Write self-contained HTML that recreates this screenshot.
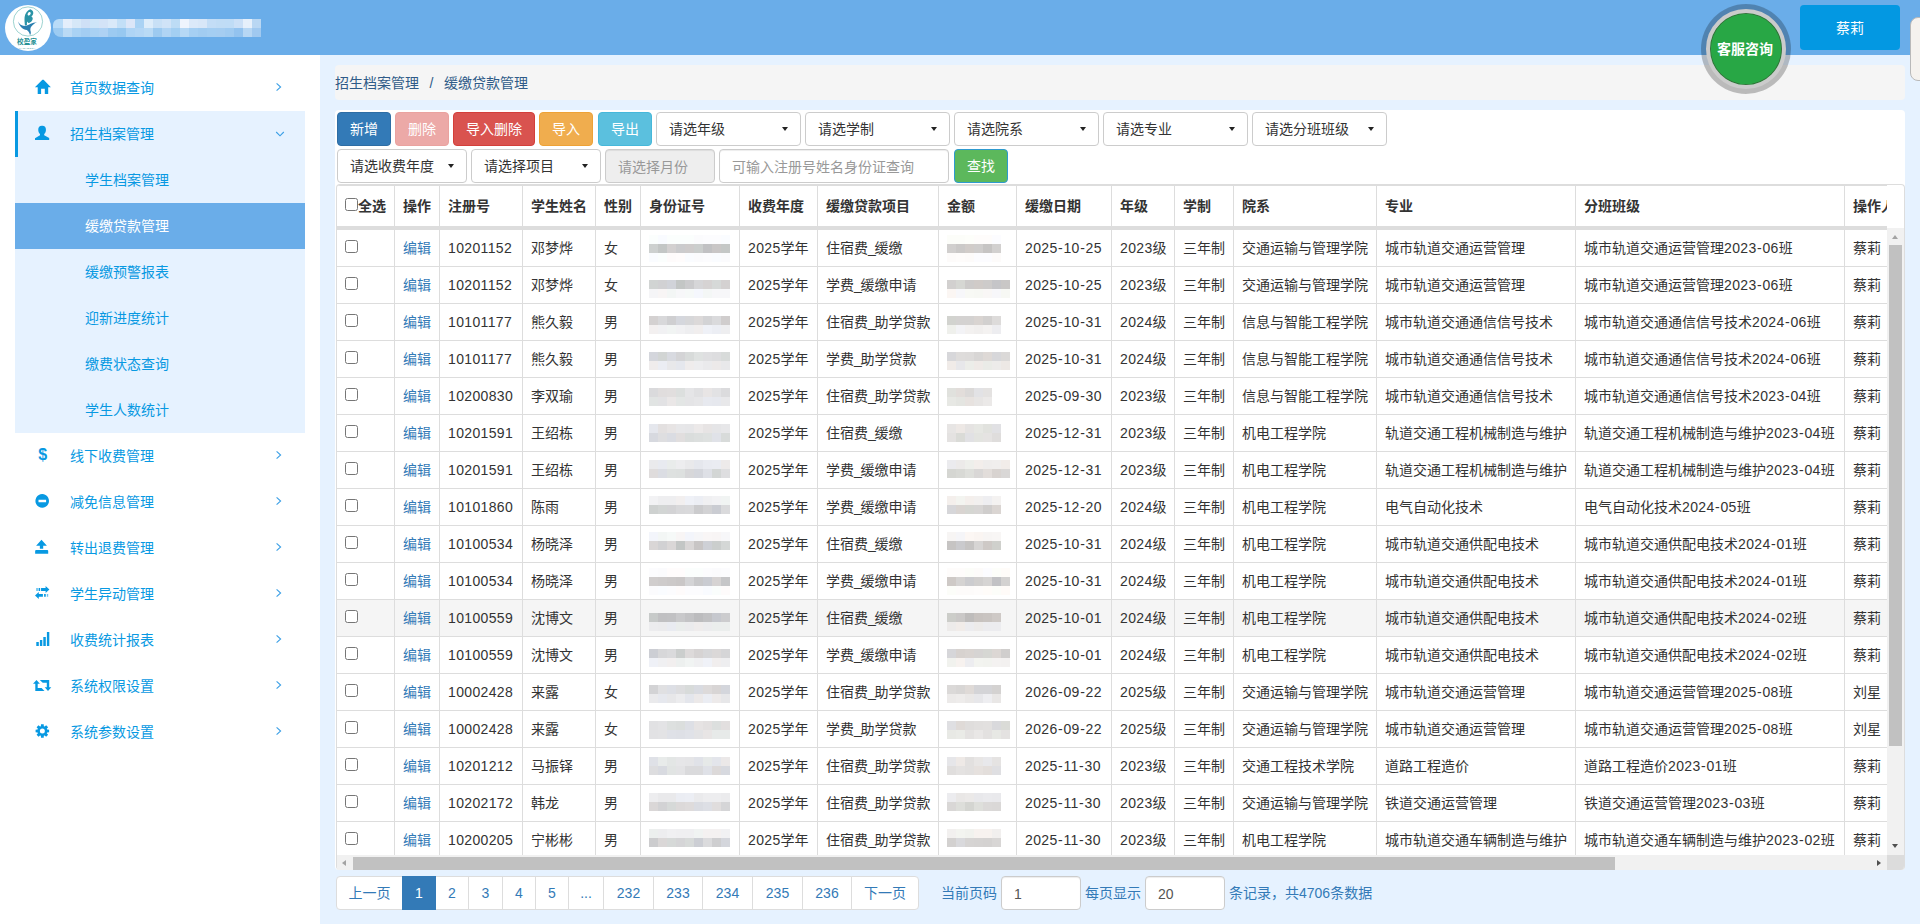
<!DOCTYPE html>
<html lang="zh-CN">
<head>
<meta charset="utf-8">
<title>缓缴贷款管理</title>
<style>
*{box-sizing:border-box;}
html,body{margin:0;padding:0;}
body{width:1920px;height:924px;overflow:hidden;position:relative;background:#e6f2ff;
 font-family:"Liberation Sans","Noto Sans CJK SC",sans-serif;font-size:14px;line-height:20px;color:#333;}
.abs{position:absolute;}
/* header */
#hdr{position:absolute;left:0;top:0;width:1920px;height:55px;background:#6aade9;}
#logo{position:absolute;left:5px;top:5px;width:46px;height:46px;border-radius:50%;background:#fff;overflow:hidden;}
#logo .nm{position:absolute;left:-1px;width:46px;top:33px;text-align:center;font-size:6.600px;line-height:8px;font-weight:bold;color:#1f8f93;letter-spacing:0;}
#logo .py{position:absolute;left:-1px;width:46px;top:42.300px;text-align:center;font-size:2.200px;line-height:3px;color:#17868c;letter-spacing:.3px;}
#ttl{position:absolute;left:53px;top:19px;width:208px;height:18px;overflow:hidden;border-radius:6px 0 0 8px;}
#ttl i{display:block;height:9px;}
#user{position:absolute;left:1800px;top:5px;width:100px;height:45px;border-radius:4px;background:#0398e2;color:#fff;text-align:center;line-height:47px;font-size:14px;}
#kf{position:absolute;left:1706px;top:9px;width:80px;height:80px;border-radius:50%;background:#28a745;border:4px solid #cbcbcb;box-shadow:inset 0 0 0 .8px rgba(70,45,45,.55),0 0 0 5px rgba(0,0,0,.24);color:#fff;font-weight:bold;font-size:14px;text-align:center;line-height:72px;z-index:5;text-indent:-2px;}
#tab{position:absolute;left:1910px;top:16.500px;width:24px;height:64px;border-radius:8px;background:#f5f2ee;border:1px solid #b9b9b9;}
/* sidebar */
#side{position:absolute;left:0;top:55px;width:320px;height:869px;background:#fff;}
#menu{position:absolute;left:15px;top:10px;width:290px;}
.mi{position:relative;height:46px;line-height:46px;color:#0899e2;font-size:14px;}
.mi .tx{position:absolute;left:55px;top:0;}
.mi svg.ic{position:absolute;left:19px;top:15px;width:16px;height:16px;fill:#0899e2;}
.mi svg.ar{position:absolute;left:259px;top:17px;width:10px;height:10px;fill:none;stroke:#6ab0e6;stroke-width:1.1;}
.mi.open{background:#e6f2ff;border-left:3px solid #0899e2;}
.mi.open .tx{left:52px;}
.mi.open svg.ic{left:16px;}
.mi.open svg.ar{left:256px;}
.sub{background:#e6f2ff;}
.si{height:46px;line-height:46px;padding-left:70px;color:#0899e2;font-size:14px;}
.si.act{background:#6aade9;color:#fff;}
/* main */
#bc{position:absolute;left:335px;top:65px;width:1570px;height:35px;border-radius:4px;background:#f5f5f5;color:#2f5b88;line-height:37px;font-size:14px;white-space:nowrap;}
#panel{position:absolute;left:335px;top:110px;width:1570px;height:760px;background:#fff;border-radius:4px;overflow:hidden;}
.btn{position:absolute;height:34px;border-radius:4px;color:#fff;text-align:center;line-height:32px;font-size:14px;border:1px solid transparent;}
.sel{position:absolute;height:34px;border-radius:4px;border:1px solid #ccc;background:#fff;line-height:32px;padding-left:12px;color:#333;font-size:14px;}
.sel:after{content:"";position:absolute;right:12px;top:14px;border:3.8px solid transparent;border-top:4px solid #222;border-bottom:0;}
.inp{position:absolute;height:34px;border-radius:4px;border:1px solid #ccc;background:#fff;line-height:34px;padding-left:12px;color:#999;font-size:14px;box-shadow:inset 0 1px 1px rgba(0,0,0,.075);}
/* table */
#tw{position:absolute;left:336px;top:184px;width:1569px;height:686px;border:1px solid #ddd;border-bottom:0;border-radius:4px;overflow:hidden;background:#fff;}
#tc{position:absolute;left:0;top:0;width:1550px;height:670px;overflow:hidden;}
table{border-collapse:separate;border-spacing:0;table-layout:fixed;width:1639px;}
th,td{border-right:1px solid #ddd;border-bottom:1px solid #ddd;padding:0 0 0 8px;white-space:nowrap;overflow:hidden;text-align:left;font-size:14px;}
th{height:45px;font-weight:bold;color:#333;border-top:1px solid #ddd;border-bottom:4px solid #ddd;}
td{height:37px;color:#333;}
td a{color:#337ab7;text-decoration:none;}
tr.hv td{background:#f5f5f5;}
.cb{display:inline-block;width:13px;height:13px;border:1px solid #767676;border-radius:2.5px;background:#fff;vertical-align:middle;margin:-5px 0 0 0;}
th .cb{margin:-5px 0 0 0;}
.ms{position:absolute;height:9px;}
.d{letter-spacing:.35px;}
.d .h{font-style:normal;margin:0 .45px;}
.u{font-style:normal;margin-right:-1.3px;}
/* scrollbars */
#vs{position:absolute;left:1550px;top:43px;width:17px;height:627px;background:#f1f1f1;}
#vs .th{position:absolute;left:2px;top:17px;width:13px;height:501px;background:#c1c1c1;}
#hs{position:absolute;left:0;top:670px;width:1550px;height:17px;background:#f1f1f1;}
#hs .th{position:absolute;left:16px;top:2px;width:1262px;height:13px;background:#c1c1c1;}
#cn{position:absolute;left:1550px;top:670px;width:17px;height:17px;background:#dcdcdc;}
.tri{position:absolute;width:0;height:0;border:0 solid transparent;}
/* pagination */
#pg{position:absolute;left:336px;top:876px;height:34px;}
.pi{position:absolute;top:0;height:34px;border:1px solid #ddd;background:#fff;color:#337ab7;text-align:center;line-height:32px;font-size:14px;}
.pi.act{background:#337ab7;border-color:#337ab7;color:#fff;}
.pt{position:absolute;top:876px;height:34px;line-height:35px;color:#337ab7;font-size:14px;white-space:nowrap;}
</style>
</head>
<body>
<div id="hdr">
  <div id="logo">
    <svg class="abs" style="left:0;top:0" width="46" height="46" viewBox="0 0 46 46">
      <circle cx="23" cy="16.5" r="14.6" fill="none" stroke="#3aa6a0" stroke-width="0.5"/>
      <path d="M25.300 4.300c-2.600 1-5.200 3.600-5.700 7.800c-.3 3 .1 6.200.3 8.500c.7-.2 1.500-.5 2.200-.9c-.3-1.300-.3-2.500.3-3.300c.3 1 .9 1.600 1.700 1.500c1.700-.5 3.300-2 3.600-3.900c.2-1.300-.4-2.300-1.600-2.600c1.300-.7 2.200-1.900 2.200-3.500c0-1.500-1-2.900-3-3.600z M22.600 9.200c.2-1.200.9-2.100 1.900-2.300c.8 0 1.300.6 1.200 1.500c-.2 1.200-1.300 2-2.600 2.200c-.3-.4-.5-.9-.5-1.400z" fill-rule="evenodd" fill="#2b93a6"/>
      <path d="M13 16.500c1.500 3 4.200 4.800 7.500 4.300c3.500-.6 6.500-3.400 11.500-3.500c-2.500 1-4.500 2.600-6 4.600c-.8 1.200-.8 3-.3 4.600c.3 1.200.2 2.600-.7 3.800c-.4-2.200-1.400-4.200-3.200-5.300c-4-.5-7.300-3.500-8.800-8.500z" fill="#2a7fb0"/>
    </svg>
    <div class="nm">校盈家</div>
    <div class="py">XIAOYINGJIA</div>
  </div>
  <div id="ttl"><i style="background:linear-gradient(90deg,#b8dbf8 0px,#b8dbf8 10px,#e4eefb 10px,#e4eefb 19px,#d6e8f8 19px,#d6e8f8 28px,#cfe0f6 28px,#cfe0f6 37px,#cde5f8 37px,#cde5f8 46px,#d3e3f7 46px,#d3e3f7 55px,#d9e9f9 55px,#d9e9f9 64px,#c2dff7 64px,#c2dff7 73px,#dbe6f8 73px,#dbe6f8 82px,#a9d2f4 82px,#a9d2f4 91px,#dcecfa 91px,#dcecfa 100px,#c8e0f6 100px,#c8e0f6 109px,#d0e3f7 109px,#d0e3f7 118px,#bddcf5 118px,#bddcf5 127px,#eef4fd 127px,#eef4fd 136px,#dbe9f9 136px,#dbe9f9 145px,#d8e7f8 145px,#d8e7f8 154px,#c3ddf6 154px,#c3ddf6 163px,#c0dcf5 163px,#c0dcf5 172px,#bfdcf6 172px,#bfdcf6 181px,#cbe0f7 181px,#cbe0f7 190px,#e6f0fb 190px,#e6f0fb 199px,#b9d7f3 199px,#b9d7f3 208px)"></i><i style="background:linear-gradient(90deg,#9ccbf2 0px,#9ccbf2 10px,#badaf5 10px,#badaf5 19px,#a9d2f4 19px,#a9d2f4 28px,#a3cdf2 28px,#a3cdf2 37px,#a9d1f3 37px,#a9d1f3 46px,#aed2f4 46px,#aed2f4 55px,#9ccaf1 55px,#9ccaf1 64px,#97c8f0 64px,#97c8f0 73px,#aed4f5 73px,#aed4f5 82px,#b3d6f5 82px,#b3d6f5 91px,#b9daf5 91px,#b9daf5 100px,#9dcaf0 100px,#9dcaf0 109px,#b0d4f4 109px,#b0d4f4 118px,#a3cff2 118px,#a3cff2 127px,#b6d8f5 127px,#b6d8f5 136px,#a5cff3 136px,#a5cff3 145px,#a1ccf1 145px,#a1ccf1 154px,#a4cef2 154px,#a4cef2 163px,#a5cdf1 163px,#a5cdf1 172px,#a0cbf1 172px,#a0cbf1 181px,#93c3ef 181px,#93c3ef 190px,#b7d7f4 190px,#b7d7f4 199px,#a0c9f0 199px,#a0c9f0 208px)"></i></div>
  <div id="user">蔡莉</div>
</div>
<div id="kf">客服咨询</div>
<div id="tab"></div>

<div id="side">
 <div id="menu">
  <div class="mi"><span class="tx">首页数据查询</span></div>
  <div class="mi open"><span class="tx">招生档案管理</span></div>
  <div class="sub">
   <div class="si">学生档案管理</div>
   <div class="si act">缓缴贷款管理</div>
   <div class="si">缓缴预警报表</div>
   <div class="si">迎新进度统计</div>
   <div class="si">缴费状态查询</div>
   <div class="si">学生人数统计</div>
  </div>
  <div class="mi"><span class="tx">线下收费管理</span></div>
  <div class="mi"><span class="tx">减免信息管理</span></div>
  <div class="mi"><span class="tx">转出退费管理</span></div>
  <div class="mi"><span class="tx">学生异动管理</span></div>
  <div class="mi"><span class="tx">收费统计报表</span></div>
  <div class="mi"><span class="tx">系统权限设置</span></div>
  <div class="mi"><span class="tx">系统参数设置</span></div>
 </div>
</div>

<svg id="ics" class="abs" style="left:0;top:0" width="320" height="924" viewBox="0 0 320 924">
<g fill="#0899e2">
<path d="M42.400 79.800 H43.600 L50.900 87.300 H48.200 V94 H44.800 V88.850 H41.100 V94 H37.700 V87.300 H34.900 Z"/>
<path d="M42.350 125.800 c2.300 0 3.600 1.600 3.600 4 c0 2-.600 3.300-1.750 4.100 v1.300 l5 2.900 v1.900 h-14.200 v-1.700 l5-3.100 v-1.300 c-1.150-.800-1.750-2.100-1.750-4.100 c0-2.400 1.300-4 3.600-4z"/>
<path fill-rule="evenodd" d="M42.200 494.100 a6.800 6.800 0 1 0 .001 0 Z M38.500 499.700 h7.600 v2.500 h-7.600 Z"/>
<path d="M41.500 539.800 L46.900 545.700 H43.200 V548.850 H39.850 V545.700 H36.100 Z M36.150 549.900 H47.200 a1 1 0 0 1 1 1 V553.850 H35.150 V550.900 a1 1 0 0 1 1-1 Z"/>
<path d="M45.600 586 L49.400 589.450 L45.600 592.900 V590.900 H41.050 V588 H45.600 Z M38.600 588 h1.550 v2.900 h-1.550 Z"/>
<path d="M36.200 588 h1.700 v2.900 h-1.700 Z M46.800 594.050 h1.400 v2.750 h-1.400 Z" opacity=".6"/>
<path d="M38.800 592 L35 595.450 L38.800 598.900 V596.800 H42.900 V594.050 H38.800 Z M44.100 594.050 h1.650 v2.750 h-1.650 Z"/>
<path d="M36.300 642.100 h2.500 V646 h-2.500 Z M39.900 639.900 h2.400 V646 h-2.400 Z M43.300 637.100 h2.500 V646 h-2.500 Z M46.900 632.100 h2.400 V646 h-2.400 Z"/>
<path d="M36.500 680 L39.900 683.700 H37.700 V687.900 H41.600 L44.500 690.900 H35.300 V683.700 H33 Z M39.800 680 H49.200 V687.300 H51.300 L48 690.900 L44.700 687.300 H46.800 V682.800 H42.700 Z"/>
<path fill-rule="evenodd" d="M40.87 726.22 L40.98 724.24 L43.72 724.24 L43.83 726.22 L44.68 726.58 L46.16 725.25 L48.10 727.19 L46.77 728.67 L47.13 729.52 L49.11 729.63 L49.11 732.37 L47.13 732.48 L46.77 733.33 L48.10 734.81 L46.16 736.75 L44.68 735.42 L43.83 735.78 L43.72 737.76 L40.98 737.76 L40.87 735.78 L40.02 735.42 L38.54 736.75 L36.60 734.81 L37.93 733.33 L37.57 732.48 L35.59 732.37 L35.59 729.63 L37.57 729.52 L37.93 728.67 L36.60 727.19 L38.54 725.25 L40.02 726.58 Z M39.85 731.00 a2.500 2.500 0 1 0 5 0 a2.500 2.500 0 1 0 -5 0 Z"/>
</g>
<path d="M276.600 83.4 L280.600 87.0 L276.600 90.6 M276.600 451.4 L280.600 455.0 L276.600 458.6 M276.600 497.4 L280.600 501.0 L276.600 504.6 M276.600 543.4 L280.600 547.0 L276.600 550.6 M276.600 589.4 L280.600 593.0 L276.600 596.6 M276.600 635.4 L280.600 639.0 L276.600 642.6 M276.600 681.4 L280.600 685.0 L276.600 688.6 M276.600 727.4 L280.600 731.0 L276.600 734.6 M276.200 132 L280 135.800 L283.800 132" fill="none" stroke="#3a9fe6" stroke-width="1.1"/>
<text x="38.300" y="460" font-family="Liberation Sans, sans-serif" font-weight="bold" font-size="16" fill="#0899e2">$</text>
</svg>
<div id="bc">招生档案管理<span style="display:inline-block;width:25px;text-align:center">/</span>缓缴贷款管理</div>
<div id="panel"></div>

<!-- toolbar -->
<div class="btn" style="left:337px;top:112px;width:54px;background:#337ab7;border-color:#2e6da4">新增</div>
<div class="btn" style="left:395px;top:112px;width:54px;background:#eca9a7;border-color:#eaa29f">删除</div>
<div class="btn" style="left:453px;top:112px;width:82px;background:#d9534f;border-color:#d43f3a">导入删除</div>
<div class="btn" style="left:539px;top:112px;width:54px;background:#f0ad4e;border-color:#eea236">导入</div>
<div class="btn" style="left:598px;top:112px;width:54px;background:#5bc0de;border-color:#46b8da">导出</div>
<div class="sel" style="left:656px;top:112px;width:145px">请选年级</div>
<div class="sel" style="left:805px;top:112px;width:145px">请选学制</div>
<div class="sel" style="left:954px;top:112px;width:145px">请选院系</div>
<div class="sel" style="left:1103px;top:112px;width:145px">请选专业</div>
<div class="sel" style="left:1252px;top:112px;width:135px">请选分班班级</div>
<div class="sel" style="left:337px;top:149px;width:130px">请选收费年度</div>
<div class="sel" style="left:471px;top:149px;width:130px">请选择项目</div>
<div class="inp" style="left:605px;top:149px;width:110px;background:#eee">请选择月份</div>
<div class="inp" style="left:719px;top:149px;width:230px">可输入注册号姓名身份证查询</div>
<div class="btn" style="left:954px;top:149px;width:54px;background:#5cb85c;border-color:#2e9ad0">查找</div>

<div id="tw">
<div id="tc">
<table id="tb">
<colgroup><col style="width:58px"><col style="width:45px"><col style="width:83px"><col style="width:73px"><col style="width:45px"><col style="width:99px"><col style="width:78px"><col style="width:121px"><col style="width:78px"><col style="width:95px"><col style="width:63px"><col style="width:59px"><col style="width:143px"><col style="width:199px"><col style="width:269px"><col style="width:131px"></colgroup>
<thead><tr><th><span class="cb"></span>全选</th><th>操作</th><th>注册号</th><th>学生姓名</th><th>性别</th><th>身份证号</th><th>收费年度</th><th>缓缴贷款项目</th><th>金额</th><th>缓缴日期</th><th>年级</th><th>学制</th><th>院系</th><th>专业</th><th>分班班级</th><th>操作人</th></tr></thead>
<tbody>
<tr><td><span class="cb"></span></td><td><a>编辑</a></td><td><span class="d">10201152</span></td><td>邓梦烨</td><td>女</td><td></td><td><span class="d">2025</span>学年</td><td>住宿费<i class="u">_</i>缓缴</td><td></td><td><span class="d">2025<i class="h">-</i>10<i class="h">-</i>25</span></td><td><span class="d">2023</span>级</td><td>三年制</td><td>交通运输与管理学院</td><td>城市轨道交通运营管理</td><td>城市轨道交通运营管理<span class="d">2023<i class="h">-</i>06</span>班</td><td>蔡莉</td></tr>
<tr><td><span class="cb"></span></td><td><a>编辑</a></td><td><span class="d">10201152</span></td><td>邓梦烨</td><td>女</td><td></td><td><span class="d">2025</span>学年</td><td>学费<i class="u">_</i>缓缴申请</td><td></td><td><span class="d">2025<i class="h">-</i>10<i class="h">-</i>25</span></td><td><span class="d">2023</span>级</td><td>三年制</td><td>交通运输与管理学院</td><td>城市轨道交通运营管理</td><td>城市轨道交通运营管理<span class="d">2023<i class="h">-</i>06</span>班</td><td>蔡莉</td></tr>
<tr><td><span class="cb"></span></td><td><a>编辑</a></td><td><span class="d">10101177</span></td><td>熊久毅</td><td>男</td><td></td><td><span class="d">2025</span>学年</td><td>住宿费<i class="u">_</i>助学贷款</td><td></td><td><span class="d">2025<i class="h">-</i>10<i class="h">-</i>31</span></td><td><span class="d">2024</span>级</td><td>三年制</td><td>信息与智能工程学院</td><td>城市轨道交通通信信号技术</td><td>城市轨道交通通信信号技术<span class="d">2024<i class="h">-</i>06</span>班</td><td>蔡莉</td></tr>
<tr><td><span class="cb"></span></td><td><a>编辑</a></td><td><span class="d">10101177</span></td><td>熊久毅</td><td>男</td><td></td><td><span class="d">2025</span>学年</td><td>学费<i class="u">_</i>助学贷款</td><td></td><td><span class="d">2025<i class="h">-</i>10<i class="h">-</i>31</span></td><td><span class="d">2024</span>级</td><td>三年制</td><td>信息与智能工程学院</td><td>城市轨道交通通信信号技术</td><td>城市轨道交通通信信号技术<span class="d">2024<i class="h">-</i>06</span>班</td><td>蔡莉</td></tr>
<tr><td><span class="cb"></span></td><td><a>编辑</a></td><td><span class="d">10200830</span></td><td>李双瑜</td><td>男</td><td></td><td><span class="d">2025</span>学年</td><td>住宿费<i class="u">_</i>助学贷款</td><td></td><td><span class="d">2025<i class="h">-</i>09<i class="h">-</i>30</span></td><td><span class="d">2023</span>级</td><td>三年制</td><td>信息与智能工程学院</td><td>城市轨道交通通信信号技术</td><td>城市轨道交通通信信号技术<span class="d">2023<i class="h">-</i>04</span>班</td><td>蔡莉</td></tr>
<tr><td><span class="cb"></span></td><td><a>编辑</a></td><td><span class="d">10201591</span></td><td>王绍栋</td><td>男</td><td></td><td><span class="d">2025</span>学年</td><td>住宿费<i class="u">_</i>缓缴</td><td></td><td><span class="d">2025<i class="h">-</i>12<i class="h">-</i>31</span></td><td><span class="d">2023</span>级</td><td>三年制</td><td>机电工程学院</td><td>轨道交通工程机械制造与维护</td><td>轨道交通工程机械制造与维护<span class="d">2023<i class="h">-</i>04</span>班</td><td>蔡莉</td></tr>
<tr><td><span class="cb"></span></td><td><a>编辑</a></td><td><span class="d">10201591</span></td><td>王绍栋</td><td>男</td><td></td><td><span class="d">2025</span>学年</td><td>学费<i class="u">_</i>缓缴申请</td><td></td><td><span class="d">2025<i class="h">-</i>12<i class="h">-</i>31</span></td><td><span class="d">2023</span>级</td><td>三年制</td><td>机电工程学院</td><td>轨道交通工程机械制造与维护</td><td>轨道交通工程机械制造与维护<span class="d">2023<i class="h">-</i>04</span>班</td><td>蔡莉</td></tr>
<tr><td><span class="cb"></span></td><td><a>编辑</a></td><td><span class="d">10101860</span></td><td>陈雨</td><td>男</td><td></td><td><span class="d">2025</span>学年</td><td>学费<i class="u">_</i>缓缴申请</td><td></td><td><span class="d">2025<i class="h">-</i>12<i class="h">-</i>20</span></td><td><span class="d">2024</span>级</td><td>三年制</td><td>机电工程学院</td><td>电气自动化技术</td><td>电气自动化技术<span class="d">2024<i class="h">-</i>05</span>班</td><td>蔡莉</td></tr>
<tr><td><span class="cb"></span></td><td><a>编辑</a></td><td><span class="d">10100534</span></td><td>杨晓泽</td><td>男</td><td></td><td><span class="d">2025</span>学年</td><td>住宿费<i class="u">_</i>缓缴</td><td></td><td><span class="d">2025<i class="h">-</i>10<i class="h">-</i>31</span></td><td><span class="d">2024</span>级</td><td>三年制</td><td>机电工程学院</td><td>城市轨道交通供配电技术</td><td>城市轨道交通供配电技术<span class="d">2024<i class="h">-</i>01</span>班</td><td>蔡莉</td></tr>
<tr><td><span class="cb"></span></td><td><a>编辑</a></td><td><span class="d">10100534</span></td><td>杨晓泽</td><td>男</td><td></td><td><span class="d">2025</span>学年</td><td>学费<i class="u">_</i>缓缴申请</td><td></td><td><span class="d">2025<i class="h">-</i>10<i class="h">-</i>31</span></td><td><span class="d">2024</span>级</td><td>三年制</td><td>机电工程学院</td><td>城市轨道交通供配电技术</td><td>城市轨道交通供配电技术<span class="d">2024<i class="h">-</i>01</span>班</td><td>蔡莉</td></tr>
<tr class="hv"><td><span class="cb"></span></td><td><a>编辑</a></td><td><span class="d">10100559</span></td><td>沈博文</td><td>男</td><td></td><td><span class="d">2025</span>学年</td><td>住宿费<i class="u">_</i>缓缴</td><td></td><td><span class="d">2025<i class="h">-</i>10<i class="h">-</i>01</span></td><td><span class="d">2024</span>级</td><td>三年制</td><td>机电工程学院</td><td>城市轨道交通供配电技术</td><td>城市轨道交通供配电技术<span class="d">2024<i class="h">-</i>02</span>班</td><td>蔡莉</td></tr>
<tr><td><span class="cb"></span></td><td><a>编辑</a></td><td><span class="d">10100559</span></td><td>沈博文</td><td>男</td><td></td><td><span class="d">2025</span>学年</td><td>学费<i class="u">_</i>缓缴申请</td><td></td><td><span class="d">2025<i class="h">-</i>10<i class="h">-</i>01</span></td><td><span class="d">2024</span>级</td><td>三年制</td><td>机电工程学院</td><td>城市轨道交通供配电技术</td><td>城市轨道交通供配电技术<span class="d">2024<i class="h">-</i>02</span>班</td><td>蔡莉</td></tr>
<tr><td><span class="cb"></span></td><td><a>编辑</a></td><td><span class="d">10002428</span></td><td>来露</td><td>女</td><td></td><td><span class="d">2025</span>学年</td><td>住宿费<i class="u">_</i>助学贷款</td><td></td><td><span class="d">2026<i class="h">-</i>09<i class="h">-</i>22</span></td><td><span class="d">2025</span>级</td><td>三年制</td><td>交通运输与管理学院</td><td>城市轨道交通运营管理</td><td>城市轨道交通运营管理<span class="d">2025<i class="h">-</i>08</span>班</td><td>刘星</td></tr>
<tr><td><span class="cb"></span></td><td><a>编辑</a></td><td><span class="d">10002428</span></td><td>来露</td><td>女</td><td></td><td><span class="d">2025</span>学年</td><td>学费<i class="u">_</i>助学贷款</td><td></td><td><span class="d">2026<i class="h">-</i>09<i class="h">-</i>22</span></td><td><span class="d">2025</span>级</td><td>三年制</td><td>交通运输与管理学院</td><td>城市轨道交通运营管理</td><td>城市轨道交通运营管理<span class="d">2025<i class="h">-</i>08</span>班</td><td>刘星</td></tr>
<tr><td><span class="cb"></span></td><td><a>编辑</a></td><td><span class="d">10201212</span></td><td>马振铎</td><td>男</td><td></td><td><span class="d">2025</span>学年</td><td>住宿费<i class="u">_</i>助学贷款</td><td></td><td><span class="d">2025<i class="h">-</i>11<i class="h">-</i>30</span></td><td><span class="d">2023</span>级</td><td>三年制</td><td>交通工程技术学院</td><td>道路工程造价</td><td>道路工程造价<span class="d">2023<i class="h">-</i>01</span>班</td><td>蔡莉</td></tr>
<tr><td><span class="cb"></span></td><td><a>编辑</a></td><td><span class="d">10202172</span></td><td>韩龙</td><td>男</td><td></td><td><span class="d">2025</span>学年</td><td>住宿费<i class="u">_</i>助学贷款</td><td></td><td><span class="d">2025<i class="h">-</i>11<i class="h">-</i>30</span></td><td><span class="d">2023</span>级</td><td>三年制</td><td>交通运输与管理学院</td><td>铁道交通运营管理</td><td>铁道交通运营管理<span class="d">2023<i class="h">-</i>03</span>班</td><td>蔡莉</td></tr>
<tr><td><span class="cb"></span></td><td><a>编辑</a></td><td><span class="d">10200205</span></td><td>宁彬彬</td><td>男</td><td></td><td><span class="d">2025</span>学年</td><td>住宿费<i class="u">_</i>助学贷款</td><td></td><td><span class="d">2025<i class="h">-</i>11<i class="h">-</i>30</span></td><td><span class="d">2023</span>级</td><td>三年制</td><td>机电工程学院</td><td>城市轨道交通车辆制造与维护</td><td>城市轨道交通车辆制造与维护<span class="d">2023<i class="h">-</i>02</span>班</td><td>蔡莉</td></tr>
</tbody>
</table>
<div class="ms" style="left:312.3px;top:50.0px;width:81px;background:linear-gradient(90deg,rgb(251,254,253) 0px,rgb(251,254,253) 9px,rgb(249,251,257) 9px,rgb(249,251,257) 18px,rgb(251,254,253) 18px,rgb(251,254,253) 27px,rgb(251,254,253) 27px,rgb(251,254,253) 36px,rgb(251,254,253) 36px,rgb(251,254,253) 45px,rgb(251,251,253) 45px,rgb(251,251,253) 54px,rgb(252,252,254) 54px,rgb(252,252,254) 63px,rgb(252,252,254) 63px,rgb(252,252,254) 72px,rgb(250,252,258) 72px,rgb(250,252,258) 81px)"></div><div class="ms" style="left:610.0px;top:50.0px;width:54px;background:linear-gradient(90deg,rgb(252,253,249) 0px,rgb(252,253,249) 9px,rgb(252,253,249) 9px,rgb(252,253,249) 18px,rgb(253,254,250) 18px,rgb(253,254,250) 27px,rgb(254,252,251) 27px,rgb(254,252,251) 36px,rgb(254,252,251) 36px,rgb(254,252,251) 45px,rgb(252,252,255) 45px,rgb(252,252,255) 54px)"></div><div class="ms" style="left:312.3px;top:59.0px;width:81px;background:linear-gradient(90deg,rgb(205,208,207) 0px,rgb(205,208,207) 9px,rgb(195,198,197) 9px,rgb(195,198,197) 18px,rgb(211,208,208) 18px,rgb(211,208,208) 27px,rgb(203,203,205) 27px,rgb(203,203,205) 36px,rgb(206,203,203) 36px,rgb(206,203,203) 45px,rgb(203,206,205) 45px,rgb(203,206,205) 54px,rgb(193,193,195) 54px,rgb(193,193,195) 63px,rgb(201,198,198) 63px,rgb(201,198,198) 72px,rgb(196,199,198) 72px,rgb(196,199,198) 81px)"></div><div class="ms" style="left:610.0px;top:59.0px;width:54px;background:linear-gradient(90deg,rgb(209,207,206) 0px,rgb(209,207,206) 9px,rgb(203,201,200) 9px,rgb(203,201,200) 18px,rgb(209,204,201) 18px,rgb(209,204,201) 27px,rgb(207,205,204) 27px,rgb(207,205,204) 36px,rgb(198,196,195) 36px,rgb(198,196,195) 45px,rgb(210,208,207) 45px,rgb(210,208,207) 54px)"></div><div class="ms" style="left:312.3px;top:68.0px;width:81px;background:linear-gradient(90deg,rgb(250,252,258) 0px,rgb(250,252,258) 9px,rgb(251,254,253) 9px,rgb(251,254,253) 18px,rgb(254,251,251) 18px,rgb(254,251,251) 27px,rgb(255,252,252) 27px,rgb(255,252,252) 36px,rgb(250,252,258) 36px,rgb(250,252,258) 45px,rgb(251,251,253) 45px,rgb(251,251,253) 54px,rgb(252,252,254) 54px,rgb(252,252,254) 63px,rgb(250,252,258) 63px,rgb(250,252,258) 72px,rgb(251,251,253) 72px,rgb(251,251,253) 81px)"></div><div class="ms" style="left:610.0px;top:68.0px;width:54px;background:linear-gradient(90deg,rgb(253,251,250) 0px,rgb(253,251,250) 9px,rgb(254,252,251) 9px,rgb(254,252,251) 18px,rgb(253,251,250) 18px,rgb(253,251,250) 27px,rgb(252,252,255) 27px,rgb(252,252,255) 36px,rgb(252,252,255) 36px,rgb(252,252,255) 45px,rgb(253,251,250) 45px,rgb(253,251,250) 54px)"></div>
<div class="ms" style="left:312.3px;top:95.0px;width:81px;background:linear-gradient(90deg,rgb(209,212,211) 0px,rgb(209,212,211) 9px,rgb(209,209,211) 9px,rgb(209,209,211) 18px,rgb(209,211,217) 18px,rgb(209,211,217) 27px,rgb(195,198,197) 27px,rgb(195,198,197) 36px,rgb(203,203,205) 36px,rgb(203,203,205) 45px,rgb(214,214,216) 45px,rgb(214,214,216) 54px,rgb(214,211,211) 54px,rgb(214,211,211) 63px,rgb(214,217,216) 63px,rgb(214,217,216) 72px,rgb(212,209,209) 72px,rgb(212,209,209) 81px)"></div><div class="ms" style="left:610.0px;top:95.0px;width:63px;background:linear-gradient(90deg,rgb(210,208,207) 0px,rgb(210,208,207) 9px,rgb(214,215,211) 9px,rgb(214,215,211) 18px,rgb(205,203,202) 18px,rgb(205,203,202) 27px,rgb(208,203,200) 27px,rgb(208,203,200) 36px,rgb(205,203,202) 36px,rgb(205,203,202) 45px,rgb(197,197,200) 45px,rgb(197,197,200) 54px,rgb(201,199,198) 54px,rgb(201,199,198) 63px)"></div><div class="ms" style="left:312.3px;top:104.0px;width:81px;background:linear-gradient(90deg,rgb(245,245,247) 0px,rgb(245,245,247) 9px,rgb(248,245,245) 9px,rgb(248,245,245) 18px,rgb(243,246,245) 18px,rgb(243,246,245) 27px,rgb(247,247,249) 27px,rgb(247,247,249) 36px,rgb(246,249,248) 36px,rgb(246,249,248) 45px,rgb(245,247,253) 45px,rgb(245,247,253) 54px,rgb(244,247,246) 54px,rgb(244,247,246) 63px,rgb(247,247,249) 63px,rgb(247,247,249) 72px,rgb(247,247,249) 72px,rgb(247,247,249) 81px)"></div><div class="ms" style="left:610.0px;top:104.0px;width:63px;background:linear-gradient(90deg,rgb(251,246,243) 0px,rgb(251,246,243) 9px,rgb(247,247,250) 9px,rgb(247,247,250) 18px,rgb(248,249,245) 18px,rgb(248,249,245) 27px,rgb(247,248,244) 27px,rgb(247,248,244) 36px,rgb(249,247,246) 36px,rgb(249,247,246) 45px,rgb(247,247,250) 45px,rgb(247,247,250) 54px,rgb(247,248,244) 54px,rgb(247,248,244) 63px)"></div>
<div class="ms" style="left:312.3px;top:131.0px;width:81px;background:linear-gradient(90deg,rgb(212,209,209) 0px,rgb(212,209,209) 9px,rgb(216,216,218) 9px,rgb(216,216,218) 18px,rgb(207,207,209) 18px,rgb(207,207,209) 27px,rgb(213,215,221) 27px,rgb(213,215,221) 36px,rgb(215,215,217) 36px,rgb(215,215,217) 45px,rgb(220,217,217) 45px,rgb(220,217,217) 54px,rgb(211,211,213) 54px,rgb(211,211,213) 63px,rgb(218,218,220) 63px,rgb(218,218,220) 72px,rgb(208,205,205) 72px,rgb(208,205,205) 81px)"></div><div class="ms" style="left:610.0px;top:131.0px;width:54px;background:linear-gradient(90deg,rgb(210,211,207) 0px,rgb(210,211,207) 9px,rgb(212,210,209) 9px,rgb(212,210,209) 18px,rgb(212,210,209) 18px,rgb(212,210,209) 27px,rgb(217,212,209) 27px,rgb(217,212,209) 36px,rgb(210,208,207) 36px,rgb(210,208,207) 45px,rgb(221,219,218) 45px,rgb(221,219,218) 54px)"></div><div class="ms" style="left:312.3px;top:140.0px;width:81px;background:linear-gradient(90deg,rgb(243,240,240) 0px,rgb(243,240,240) 9px,rgb(241,241,243) 9px,rgb(241,241,243) 18px,rgb(241,244,243) 18px,rgb(241,244,243) 27px,rgb(241,241,243) 27px,rgb(241,241,243) 36px,rgb(238,238,240) 36px,rgb(238,238,240) 45px,rgb(241,238,238) 45px,rgb(241,238,238) 54px,rgb(239,241,247) 54px,rgb(239,241,247) 63px,rgb(236,238,244) 63px,rgb(236,238,244) 72px,rgb(238,238,240) 72px,rgb(238,238,240) 81px)"></div><div class="ms" style="left:610.0px;top:140.0px;width:54px;background:linear-gradient(90deg,rgb(239,240,236) 0px,rgb(239,240,236) 9px,rgb(243,243,246) 9px,rgb(243,243,246) 18px,rgb(243,241,240) 18px,rgb(243,241,240) 27px,rgb(241,239,238) 27px,rgb(241,239,238) 36px,rgb(244,242,241) 36px,rgb(244,242,241) 45px,rgb(237,237,240) 45px,rgb(237,237,240) 54px)"></div>
<div class="ms" style="left:312.3px;top:167.0px;width:81px;background:linear-gradient(90deg,rgb(212,214,220) 0px,rgb(212,214,220) 9px,rgb(210,213,212) 9px,rgb(210,213,212) 18px,rgb(216,218,224) 18px,rgb(216,218,224) 27px,rgb(212,212,214) 27px,rgb(212,212,214) 36px,rgb(216,219,218) 36px,rgb(216,219,218) 45px,rgb(223,226,225) 45px,rgb(223,226,225) 54px,rgb(223,223,225) 54px,rgb(223,223,225) 63px,rgb(221,221,223) 63px,rgb(221,221,223) 72px,rgb(216,219,218) 72px,rgb(216,219,218) 81px)"></div><div class="ms" style="left:610.0px;top:167.0px;width:63px;background:linear-gradient(90deg,rgb(215,215,218) 0px,rgb(215,215,218) 9px,rgb(222,220,219) 9px,rgb(222,220,219) 18px,rgb(221,219,218) 18px,rgb(221,219,218) 27px,rgb(216,214,213) 27px,rgb(216,214,213) 36px,rgb(222,217,214) 36px,rgb(222,217,214) 45px,rgb(215,215,218) 45px,rgb(215,215,218) 54px,rgb(219,217,216) 54px,rgb(219,217,216) 63px)"></div><div class="ms" style="left:312.3px;top:176.0px;width:81px;background:linear-gradient(90deg,rgb(239,236,236) 0px,rgb(239,236,236) 9px,rgb(235,237,243) 9px,rgb(235,237,243) 18px,rgb(232,232,234) 18px,rgb(232,232,234) 27px,rgb(229,231,237) 27px,rgb(229,231,237) 36px,rgb(239,236,236) 36px,rgb(239,236,236) 45px,rgb(237,237,239) 45px,rgb(237,237,239) 54px,rgb(234,234,236) 54px,rgb(234,234,236) 63px,rgb(236,233,233) 63px,rgb(236,233,233) 72px,rgb(232,232,234) 72px,rgb(232,232,234) 81px)"></div><div class="ms" style="left:610.0px;top:176.0px;width:63px;background:linear-gradient(90deg,rgb(240,235,232) 0px,rgb(240,235,232) 9px,rgb(231,231,234) 9px,rgb(231,231,234) 18px,rgb(236,237,233) 18px,rgb(236,237,233) 27px,rgb(239,234,231) 27px,rgb(239,234,231) 36px,rgb(234,235,231) 36px,rgb(234,235,231) 45px,rgb(237,235,234) 45px,rgb(237,235,234) 54px,rgb(237,232,229) 54px,rgb(237,232,229) 63px)"></div>
<div class="ms" style="left:312.3px;top:203.0px;width:81px;background:linear-gradient(90deg,rgb(218,218,220) 0px,rgb(218,218,220) 9px,rgb(224,221,221) 9px,rgb(224,221,221) 18px,rgb(225,222,222) 18px,rgb(225,222,222) 27px,rgb(220,223,222) 27px,rgb(220,223,222) 36px,rgb(229,229,231) 36px,rgb(229,229,231) 45px,rgb(224,224,226) 45px,rgb(224,224,226) 54px,rgb(232,229,229) 54px,rgb(232,229,229) 63px,rgb(226,226,228) 63px,rgb(226,226,228) 72px,rgb(219,219,221) 72px,rgb(219,219,221) 81px)"></div><div class="ms" style="left:610.0px;top:203.0px;width:45px;background:linear-gradient(90deg,rgb(224,225,221) 0px,rgb(224,225,221) 9px,rgb(226,221,218) 9px,rgb(226,221,218) 18px,rgb(219,217,216) 18px,rgb(219,217,216) 27px,rgb(226,226,229) 27px,rgb(226,226,229) 36px,rgb(228,226,225) 36px,rgb(228,226,225) 45px)"></div><div class="ms" style="left:312.3px;top:212.0px;width:81px;background:linear-gradient(90deg,rgb(225,228,227) 0px,rgb(225,228,227) 9px,rgb(226,226,228) 9px,rgb(226,226,228) 18px,rgb(234,231,231) 18px,rgb(234,231,231) 27px,rgb(227,230,229) 27px,rgb(227,230,229) 36px,rgb(228,228,230) 36px,rgb(228,228,230) 45px,rgb(230,230,232) 45px,rgb(230,230,232) 54px,rgb(231,233,239) 54px,rgb(231,233,239) 63px,rgb(230,232,238) 63px,rgb(230,232,238) 72px,rgb(232,232,234) 72px,rgb(232,232,234) 81px)"></div><div class="ms" style="left:610.0px;top:212.0px;width:45px;background:linear-gradient(90deg,rgb(231,232,228) 0px,rgb(231,232,228) 9px,rgb(228,229,225) 9px,rgb(228,229,225) 18px,rgb(231,226,223) 18px,rgb(231,226,223) 27px,rgb(231,229,228) 27px,rgb(231,229,228) 36px,rgb(235,233,232) 36px,rgb(235,233,232) 45px)"></div>
<div class="ms" style="left:312.3px;top:239.0px;width:81px;background:linear-gradient(90deg,rgb(229,231,237) 0px,rgb(229,231,237) 9px,rgb(227,224,224) 9px,rgb(227,224,224) 18px,rgb(231,228,228) 18px,rgb(231,228,228) 27px,rgb(231,231,233) 27px,rgb(231,231,233) 36px,rgb(230,230,232) 36px,rgb(230,230,232) 45px,rgb(236,233,233) 45px,rgb(236,233,233) 54px,rgb(231,228,228) 54px,rgb(231,228,228) 63px,rgb(229,229,231) 63px,rgb(229,229,231) 72px,rgb(231,231,233) 72px,rgb(231,231,233) 81px)"></div><div class="ms" style="left:610.0px;top:239.0px;width:54px;background:linear-gradient(90deg,rgb(231,229,228) 0px,rgb(231,229,228) 9px,rgb(237,232,229) 9px,rgb(237,232,229) 18px,rgb(229,227,226) 18px,rgb(229,227,226) 27px,rgb(230,231,227) 27px,rgb(230,231,227) 36px,rgb(225,226,222) 36px,rgb(225,226,222) 45px,rgb(225,225,228) 45px,rgb(225,225,228) 54px)"></div><div class="ms" style="left:312.3px;top:248.0px;width:81px;background:linear-gradient(90deg,rgb(215,217,223) 0px,rgb(215,217,223) 9px,rgb(222,222,224) 9px,rgb(222,222,224) 18px,rgb(218,220,226) 18px,rgb(218,220,226) 27px,rgb(225,222,222) 27px,rgb(225,222,222) 36px,rgb(218,221,220) 36px,rgb(218,221,220) 45px,rgb(220,223,222) 45px,rgb(220,223,222) 54px,rgb(222,225,224) 54px,rgb(222,225,224) 63px,rgb(224,226,232) 63px,rgb(224,226,232) 72px,rgb(216,219,218) 72px,rgb(216,219,218) 81px)"></div><div class="ms" style="left:610.0px;top:248.0px;width:54px;background:linear-gradient(90deg,rgb(228,226,225) 0px,rgb(228,226,225) 9px,rgb(218,219,215) 9px,rgb(218,219,215) 18px,rgb(225,225,228) 18px,rgb(225,225,228) 27px,rgb(227,228,224) 27px,rgb(227,228,224) 36px,rgb(229,227,226) 36px,rgb(229,227,226) 45px,rgb(223,221,220) 45px,rgb(223,221,220) 54px)"></div>
<div class="ms" style="left:312.3px;top:275.0px;width:81px;background:linear-gradient(90deg,rgb(234,234,236) 0px,rgb(234,234,236) 9px,rgb(232,234,240) 9px,rgb(232,234,240) 18px,rgb(233,236,235) 18px,rgb(233,236,235) 27px,rgb(237,237,239) 27px,rgb(237,237,239) 36px,rgb(233,233,235) 36px,rgb(233,233,235) 45px,rgb(229,231,237) 45px,rgb(229,231,237) 54px,rgb(233,235,241) 54px,rgb(233,235,241) 63px,rgb(234,236,242) 63px,rgb(234,236,242) 72px,rgb(237,234,234) 72px,rgb(237,234,234) 81px)"></div><div class="ms" style="left:610.0px;top:275.0px;width:63px;background:linear-gradient(90deg,rgb(235,235,238) 0px,rgb(235,235,238) 9px,rgb(236,234,233) 9px,rgb(236,234,233) 18px,rgb(238,239,235) 18px,rgb(238,239,235) 27px,rgb(243,238,235) 27px,rgb(243,238,235) 36px,rgb(239,237,236) 36px,rgb(239,237,236) 45px,rgb(240,238,237) 45px,rgb(240,238,237) 54px,rgb(241,236,233) 54px,rgb(241,236,233) 63px)"></div><div class="ms" style="left:312.3px;top:284.0px;width:81px;background:linear-gradient(90deg,rgb(223,220,220) 0px,rgb(223,220,220) 9px,rgb(219,221,227) 9px,rgb(219,221,227) 18px,rgb(222,225,224) 18px,rgb(222,225,224) 27px,rgb(221,224,223) 27px,rgb(221,224,223) 36px,rgb(215,215,217) 36px,rgb(215,215,217) 45px,rgb(212,214,220) 45px,rgb(212,214,220) 54px,rgb(222,224,230) 54px,rgb(222,224,230) 63px,rgb(211,214,213) 63px,rgb(211,214,213) 72px,rgb(222,222,224) 72px,rgb(222,222,224) 81px)"></div><div class="ms" style="left:610.0px;top:284.0px;width:63px;background:linear-gradient(90deg,rgb(213,214,210) 0px,rgb(213,214,210) 9px,rgb(216,217,213) 9px,rgb(216,217,213) 18px,rgb(222,223,219) 18px,rgb(222,223,219) 27px,rgb(217,215,214) 27px,rgb(217,215,214) 36px,rgb(226,221,218) 36px,rgb(226,221,218) 45px,rgb(216,211,208) 45px,rgb(216,211,208) 54px,rgb(217,215,214) 54px,rgb(217,215,214) 63px)"></div>
<div class="ms" style="left:312.3px;top:311.0px;width:81px;background:linear-gradient(90deg,rgb(242,242,244) 0px,rgb(242,242,244) 9px,rgb(238,238,240) 9px,rgb(238,238,240) 18px,rgb(238,238,240) 18px,rgb(238,238,240) 27px,rgb(242,239,239) 27px,rgb(242,239,239) 36px,rgb(239,241,247) 36px,rgb(239,241,247) 45px,rgb(236,238,244) 45px,rgb(236,238,244) 54px,rgb(240,240,242) 54px,rgb(240,240,242) 63px,rgb(242,242,244) 63px,rgb(242,242,244) 72px,rgb(241,244,243) 72px,rgb(241,244,243) 81px)"></div><div class="ms" style="left:610.0px;top:311.0px;width:54px;background:linear-gradient(90deg,rgb(244,239,236) 0px,rgb(244,239,236) 9px,rgb(243,244,240) 9px,rgb(243,244,240) 18px,rgb(244,239,236) 18px,rgb(244,239,236) 27px,rgb(242,240,239) 27px,rgb(242,240,239) 36px,rgb(238,238,241) 36px,rgb(238,238,241) 45px,rgb(244,242,241) 45px,rgb(244,242,241) 54px)"></div><div class="ms" style="left:312.3px;top:320.0px;width:81px;background:linear-gradient(90deg,rgb(206,209,208) 0px,rgb(206,209,208) 9px,rgb(210,213,212) 9px,rgb(210,213,212) 18px,rgb(211,211,213) 18px,rgb(211,211,213) 27px,rgb(216,216,218) 27px,rgb(216,216,218) 36px,rgb(217,217,219) 36px,rgb(217,217,219) 45px,rgb(203,203,205) 45px,rgb(203,203,205) 54px,rgb(210,210,212) 54px,rgb(210,210,212) 63px,rgb(202,204,210) 63px,rgb(202,204,210) 72px,rgb(218,218,220) 72px,rgb(218,218,220) 81px)"></div><div class="ms" style="left:610.0px;top:320.0px;width:54px;background:linear-gradient(90deg,rgb(214,214,217) 0px,rgb(214,214,217) 9px,rgb(217,212,209) 9px,rgb(217,212,209) 18px,rgb(213,214,210) 18px,rgb(213,214,210) 27px,rgb(215,213,212) 27px,rgb(215,213,212) 36px,rgb(207,205,204) 36px,rgb(207,205,204) 45px,rgb(218,213,210) 45px,rgb(218,213,210) 54px)"></div>
<div class="ms" style="left:312.3px;top:347.0px;width:81px;background:linear-gradient(90deg,rgb(243,245,251) 0px,rgb(243,245,251) 9px,rgb(243,246,245) 9px,rgb(243,246,245) 18px,rgb(246,249,248) 18px,rgb(246,249,248) 27px,rgb(248,245,245) 27px,rgb(248,245,245) 36px,rgb(243,245,251) 36px,rgb(243,245,251) 45px,rgb(246,246,248) 45px,rgb(246,246,248) 54px,rgb(249,246,246) 54px,rgb(249,246,246) 63px,rgb(248,245,245) 63px,rgb(248,245,245) 72px,rgb(247,247,249) 72px,rgb(247,247,249) 81px)"></div><div class="ms" style="left:610.0px;top:347.0px;width:54px;background:linear-gradient(90deg,rgb(247,245,244) 0px,rgb(247,245,244) 9px,rgb(245,245,248) 9px,rgb(245,245,248) 18px,rgb(252,247,244) 18px,rgb(252,247,244) 27px,rgb(250,245,242) 27px,rgb(250,245,242) 36px,rgb(247,245,244) 36px,rgb(247,245,244) 45px,rgb(248,246,245) 45px,rgb(248,246,245) 54px)"></div><div class="ms" style="left:312.3px;top:356.0px;width:81px;background:linear-gradient(90deg,rgb(217,214,214) 0px,rgb(217,214,214) 9px,rgb(209,209,211) 9px,rgb(209,209,211) 18px,rgb(218,215,215) 18px,rgb(218,215,215) 27px,rgb(195,198,197) 27px,rgb(195,198,197) 36px,rgb(217,214,214) 36px,rgb(217,214,214) 45px,rgb(200,197,197) 45px,rgb(200,197,197) 54px,rgb(206,208,214) 54px,rgb(206,208,214) 63px,rgb(203,206,205) 63px,rgb(203,206,205) 72px,rgb(212,215,214) 72px,rgb(212,215,214) 81px)"></div><div class="ms" style="left:610.0px;top:356.0px;width:54px;background:linear-gradient(90deg,rgb(198,196,195) 0px,rgb(198,196,195) 9px,rgb(202,202,205) 9px,rgb(202,202,205) 18px,rgb(198,196,195) 18px,rgb(198,196,195) 27px,rgb(215,213,212) 27px,rgb(215,213,212) 36px,rgb(206,201,198) 36px,rgb(206,201,198) 45px,rgb(207,208,204) 45px,rgb(207,208,204) 54px)"></div>
<div class="ms" style="left:312.3px;top:383.0px;width:81px;background:linear-gradient(90deg,rgb(252,252,254) 0px,rgb(252,252,254) 9px,rgb(251,251,253) 9px,rgb(251,251,253) 18px,rgb(255,252,252) 18px,rgb(255,252,252) 27px,rgb(255,252,252) 27px,rgb(255,252,252) 36px,rgb(251,254,253) 36px,rgb(251,254,253) 45px,rgb(251,254,253) 45px,rgb(251,254,253) 54px,rgb(252,252,254) 54px,rgb(252,252,254) 63px,rgb(251,251,253) 63px,rgb(251,251,253) 72px,rgb(252,252,254) 72px,rgb(252,252,254) 81px)"></div><div class="ms" style="left:610.0px;top:383.0px;width:63px;background:linear-gradient(90deg,rgb(254,252,251) 0px,rgb(254,252,251) 9px,rgb(254,252,251) 9px,rgb(254,252,251) 18px,rgb(252,253,249) 18px,rgb(252,253,249) 27px,rgb(253,251,250) 27px,rgb(253,251,250) 36px,rgb(252,252,255) 36px,rgb(252,252,255) 45px,rgb(253,254,250) 45px,rgb(253,254,250) 54px,rgb(257,252,249) 54px,rgb(257,252,249) 63px)"></div><div class="ms" style="left:312.3px;top:392.0px;width:81px;background:linear-gradient(90deg,rgb(208,205,205) 0px,rgb(208,205,205) 9px,rgb(206,203,203) 9px,rgb(206,203,203) 18px,rgb(204,201,201) 18px,rgb(204,201,201) 27px,rgb(202,199,199) 27px,rgb(202,199,199) 36px,rgb(212,212,214) 36px,rgb(212,212,214) 45px,rgb(201,201,203) 45px,rgb(201,201,203) 54px,rgb(202,204,210) 54px,rgb(202,204,210) 63px,rgb(214,211,211) 63px,rgb(214,211,211) 72px,rgb(198,198,200) 72px,rgb(198,198,200) 81px)"></div><div class="ms" style="left:610.0px;top:392.0px;width:63px;background:linear-gradient(90deg,rgb(206,201,198) 0px,rgb(206,201,198) 9px,rgb(213,211,210) 9px,rgb(213,211,210) 18px,rgb(204,204,207) 18px,rgb(204,204,207) 27px,rgb(209,207,206) 27px,rgb(209,207,206) 36px,rgb(214,212,211) 36px,rgb(214,212,211) 45px,rgb(194,194,197) 45px,rgb(194,194,197) 54px,rgb(212,210,209) 54px,rgb(212,210,209) 63px)"></div><div class="ms" style="left:312.3px;top:401.0px;width:81px;background:linear-gradient(90deg,rgb(251,251,253) 0px,rgb(251,251,253) 9px,rgb(250,252,258) 9px,rgb(250,252,258) 18px,rgb(252,252,254) 18px,rgb(252,252,254) 27px,rgb(254,251,251) 27px,rgb(254,251,251) 36px,rgb(252,252,254) 36px,rgb(252,252,254) 45px,rgb(252,252,254) 45px,rgb(252,252,254) 54px,rgb(249,251,257) 54px,rgb(249,251,257) 63px,rgb(250,253,252) 63px,rgb(250,253,252) 72px,rgb(254,251,251) 72px,rgb(254,251,251) 81px)"></div><div class="ms" style="left:610.0px;top:401.0px;width:63px;background:linear-gradient(90deg,rgb(252,253,249) 0px,rgb(252,253,249) 9px,rgb(253,251,250) 9px,rgb(253,251,250) 18px,rgb(253,251,250) 18px,rgb(253,251,250) 27px,rgb(254,252,251) 27px,rgb(254,252,251) 36px,rgb(257,252,249) 36px,rgb(257,252,249) 45px,rgb(252,253,249) 45px,rgb(252,253,249) 54px,rgb(256,251,248) 54px,rgb(256,251,248) 63px)"></div>
<div class="ms" style="left:312.3px;top:428.0px;width:81px;background:linear-gradient(90deg,rgb(199,202,201) 0px,rgb(199,202,201) 9px,rgb(192,192,194) 9px,rgb(192,192,194) 18px,rgb(193,193,195) 18px,rgb(193,193,195) 27px,rgb(201,201,203) 27px,rgb(201,201,203) 36px,rgb(195,195,197) 36px,rgb(195,195,197) 45px,rgb(188,188,190) 45px,rgb(188,188,190) 54px,rgb(193,193,195) 54px,rgb(193,193,195) 63px,rgb(198,200,206) 63px,rgb(198,200,206) 72px,rgb(204,204,206) 72px,rgb(204,204,206) 81px)"></div><div class="ms" style="left:610.0px;top:428.0px;width:54px;background:linear-gradient(90deg,rgb(204,205,201) 0px,rgb(204,205,201) 9px,rgb(202,200,199) 9px,rgb(202,200,199) 18px,rgb(190,188,187) 18px,rgb(190,188,187) 27px,rgb(199,194,191) 27px,rgb(199,194,191) 36px,rgb(201,196,193) 36px,rgb(201,196,193) 45px,rgb(206,201,198) 45px,rgb(206,201,198) 54px)"></div><div class="ms" style="left:312.3px;top:437.0px;width:81px;background:linear-gradient(90deg,rgb(236,236,238) 0px,rgb(236,236,238) 9px,rgb(235,235,237) 9px,rgb(235,235,237) 18px,rgb(233,235,241) 18px,rgb(233,235,241) 27px,rgb(234,237,236) 27px,rgb(234,237,236) 36px,rgb(235,235,237) 36px,rgb(235,235,237) 45px,rgb(239,236,236) 45px,rgb(239,236,236) 54px,rgb(236,236,238) 54px,rgb(236,236,238) 63px,rgb(235,238,237) 63px,rgb(235,238,237) 72px,rgb(235,238,237) 72px,rgb(235,238,237) 81px)"></div><div class="ms" style="left:610.0px;top:437.0px;width:54px;background:linear-gradient(90deg,rgb(237,235,234) 0px,rgb(237,235,234) 9px,rgb(241,236,233) 9px,rgb(241,236,233) 18px,rgb(236,236,239) 18px,rgb(236,236,239) 27px,rgb(237,235,234) 27px,rgb(237,235,234) 36px,rgb(236,236,239) 36px,rgb(236,236,239) 45px,rgb(236,236,239) 45px,rgb(236,236,239) 54px)"></div>
<div class="ms" style="left:312.3px;top:464.0px;width:81px;background:linear-gradient(90deg,rgb(204,206,212) 0px,rgb(204,206,212) 9px,rgb(215,215,217) 9px,rgb(215,215,217) 18px,rgb(218,218,220) 18px,rgb(218,218,220) 27px,rgb(203,206,205) 27px,rgb(203,206,205) 36px,rgb(221,218,218) 36px,rgb(221,218,218) 45px,rgb(214,211,211) 45px,rgb(214,211,211) 54px,rgb(215,215,217) 54px,rgb(215,215,217) 63px,rgb(219,216,216) 63px,rgb(219,216,216) 72px,rgb(213,213,215) 72px,rgb(213,213,215) 81px)"></div><div class="ms" style="left:610.0px;top:464.0px;width:63px;background:linear-gradient(90deg,rgb(214,214,217) 0px,rgb(214,214,217) 9px,rgb(215,210,207) 9px,rgb(215,210,207) 18px,rgb(217,212,209) 18px,rgb(217,212,209) 27px,rgb(214,212,211) 27px,rgb(214,212,211) 36px,rgb(214,215,211) 36px,rgb(214,215,211) 45px,rgb(220,215,212) 45px,rgb(220,215,212) 54px,rgb(208,206,205) 54px,rgb(208,206,205) 63px)"></div><div class="ms" style="left:312.3px;top:473.0px;width:81px;background:linear-gradient(90deg,rgb(239,241,247) 0px,rgb(239,241,247) 9px,rgb(240,240,242) 9px,rgb(240,240,242) 18px,rgb(242,239,239) 18px,rgb(242,239,239) 27px,rgb(237,240,239) 27px,rgb(237,240,239) 36px,rgb(241,244,243) 36px,rgb(241,244,243) 45px,rgb(240,240,242) 45px,rgb(240,240,242) 54px,rgb(240,242,248) 54px,rgb(240,242,248) 63px,rgb(241,238,238) 63px,rgb(241,238,238) 72px,rgb(238,238,240) 72px,rgb(238,238,240) 81px)"></div><div class="ms" style="left:610.0px;top:473.0px;width:63px;background:linear-gradient(90deg,rgb(241,242,238) 0px,rgb(241,242,238) 9px,rgb(247,242,239) 9px,rgb(247,242,239) 18px,rgb(237,237,240) 18px,rgb(237,237,240) 27px,rgb(243,244,240) 27px,rgb(243,244,240) 36px,rgb(242,243,239) 36px,rgb(242,243,239) 45px,rgb(244,242,241) 45px,rgb(244,242,241) 54px,rgb(243,241,240) 54px,rgb(243,241,240) 63px)"></div>
<div class="ms" style="left:312.3px;top:500.0px;width:81px;background:linear-gradient(90deg,rgb(211,211,213) 0px,rgb(211,211,213) 9px,rgb(224,224,226) 9px,rgb(224,224,226) 18px,rgb(221,223,229) 18px,rgb(221,223,229) 27px,rgb(221,221,223) 27px,rgb(221,221,223) 36px,rgb(216,219,218) 36px,rgb(216,219,218) 45px,rgb(217,219,225) 45px,rgb(217,219,225) 54px,rgb(221,218,218) 54px,rgb(221,218,218) 63px,rgb(216,213,213) 63px,rgb(216,213,213) 72px,rgb(212,214,220) 72px,rgb(212,214,220) 81px)"></div><div class="ms" style="left:610.0px;top:500.0px;width:54px;background:linear-gradient(90deg,rgb(219,217,216) 0px,rgb(219,217,216) 9px,rgb(216,214,213) 9px,rgb(216,214,213) 18px,rgb(223,218,215) 18px,rgb(223,218,215) 27px,rgb(212,212,215) 27px,rgb(212,212,215) 36px,rgb(212,212,215) 36px,rgb(212,212,215) 45px,rgb(212,210,209) 45px,rgb(212,210,209) 54px)"></div><div class="ms" style="left:312.3px;top:509.0px;width:81px;background:linear-gradient(90deg,rgb(234,234,236) 0px,rgb(234,234,236) 9px,rgb(230,232,238) 9px,rgb(230,232,238) 18px,rgb(231,231,233) 18px,rgb(231,231,233) 27px,rgb(236,236,238) 27px,rgb(236,236,238) 36px,rgb(228,230,236) 36px,rgb(228,230,236) 45px,rgb(236,233,233) 45px,rgb(236,233,233) 54px,rgb(235,237,243) 54px,rgb(235,237,243) 63px,rgb(237,234,234) 63px,rgb(237,234,234) 72px,rgb(231,231,233) 72px,rgb(231,231,233) 81px)"></div><div class="ms" style="left:610.0px;top:509.0px;width:54px;background:linear-gradient(90deg,rgb(236,234,233) 0px,rgb(236,234,233) 9px,rgb(238,236,235) 9px,rgb(238,236,235) 18px,rgb(234,232,231) 18px,rgb(234,232,231) 27px,rgb(231,231,234) 27px,rgb(231,231,234) 36px,rgb(238,238,241) 36px,rgb(238,238,241) 45px,rgb(233,231,230) 45px,rgb(233,231,230) 54px)"></div>
<div class="ms" style="left:312.3px;top:536.0px;width:81px;background:linear-gradient(90deg,rgb(225,225,227) 0px,rgb(225,225,227) 9px,rgb(227,227,229) 9px,rgb(227,227,229) 18px,rgb(221,224,223) 18px,rgb(221,224,223) 27px,rgb(219,222,221) 27px,rgb(219,222,221) 36px,rgb(221,223,229) 36px,rgb(221,223,229) 45px,rgb(230,227,227) 45px,rgb(230,227,227) 54px,rgb(227,224,224) 54px,rgb(227,224,224) 63px,rgb(220,223,222) 63px,rgb(220,223,222) 72px,rgb(226,223,223) 72px,rgb(226,223,223) 81px)"></div><div class="ms" style="left:610.0px;top:536.0px;width:63px;background:linear-gradient(90deg,rgb(223,223,226) 0px,rgb(223,223,226) 9px,rgb(223,218,215) 9px,rgb(223,218,215) 18px,rgb(223,221,220) 18px,rgb(223,221,220) 27px,rgb(225,223,222) 27px,rgb(225,223,222) 36px,rgb(226,224,223) 36px,rgb(226,224,223) 45px,rgb(217,217,220) 45px,rgb(217,217,220) 54px,rgb(218,219,215) 54px,rgb(218,219,215) 63px)"></div><div class="ms" style="left:312.3px;top:545.0px;width:81px;background:linear-gradient(90deg,rgb(226,226,228) 0px,rgb(226,226,228) 9px,rgb(227,227,229) 9px,rgb(227,227,229) 18px,rgb(223,225,231) 18px,rgb(223,225,231) 27px,rgb(222,224,230) 27px,rgb(222,224,230) 36px,rgb(224,226,232) 36px,rgb(224,226,232) 45px,rgb(227,227,229) 45px,rgb(227,227,229) 54px,rgb(232,229,229) 54px,rgb(232,229,229) 63px,rgb(231,234,233) 63px,rgb(231,234,233) 72px,rgb(231,234,233) 72px,rgb(231,234,233) 81px)"></div><div class="ms" style="left:610.0px;top:545.0px;width:63px;background:linear-gradient(90deg,rgb(232,233,229) 0px,rgb(232,233,229) 9px,rgb(234,235,231) 9px,rgb(234,235,231) 18px,rgb(228,226,225) 18px,rgb(228,226,225) 27px,rgb(233,231,230) 27px,rgb(233,231,230) 36px,rgb(227,225,224) 36px,rgb(227,225,224) 45px,rgb(231,232,228) 45px,rgb(231,232,228) 54px,rgb(228,226,225) 54px,rgb(228,226,225) 63px)"></div>
<div class="ms" style="left:312.3px;top:572.0px;width:81px;background:linear-gradient(90deg,rgb(223,225,231) 0px,rgb(223,225,231) 9px,rgb(232,235,234) 9px,rgb(232,235,234) 18px,rgb(227,230,229) 18px,rgb(227,230,229) 27px,rgb(230,230,232) 27px,rgb(230,230,232) 36px,rgb(229,229,231) 36px,rgb(229,229,231) 45px,rgb(224,226,232) 45px,rgb(224,226,232) 54px,rgb(230,233,232) 54px,rgb(230,233,232) 63px,rgb(227,229,235) 63px,rgb(227,229,235) 72px,rgb(235,232,232) 72px,rgb(235,232,232) 81px)"></div><div class="ms" style="left:610.0px;top:572.0px;width:54px;background:linear-gradient(90deg,rgb(230,230,233) 0px,rgb(230,230,233) 9px,rgb(238,233,230) 9px,rgb(238,233,230) 18px,rgb(226,224,223) 18px,rgb(226,224,223) 27px,rgb(232,230,229) 27px,rgb(232,230,229) 36px,rgb(232,232,235) 36px,rgb(232,232,235) 45px,rgb(229,227,226) 45px,rgb(229,227,226) 54px)"></div><div class="ms" style="left:312.3px;top:581.0px;width:81px;background:linear-gradient(90deg,rgb(221,221,223) 0px,rgb(221,221,223) 9px,rgb(216,218,224) 9px,rgb(216,218,224) 18px,rgb(225,228,227) 18px,rgb(225,228,227) 27px,rgb(227,227,229) 27px,rgb(227,227,229) 36px,rgb(218,218,220) 36px,rgb(218,218,220) 45px,rgb(218,218,220) 45px,rgb(218,218,220) 54px,rgb(223,225,231) 54px,rgb(223,225,231) 63px,rgb(220,217,217) 63px,rgb(220,217,217) 72px,rgb(215,217,223) 72px,rgb(215,217,223) 81px)"></div><div class="ms" style="left:610.0px;top:581.0px;width:54px;background:linear-gradient(90deg,rgb(224,222,221) 0px,rgb(224,222,221) 9px,rgb(228,226,225) 9px,rgb(228,226,225) 18px,rgb(226,224,223) 18px,rgb(226,224,223) 27px,rgb(230,225,222) 27px,rgb(230,225,222) 36px,rgb(227,222,219) 36px,rgb(227,222,219) 45px,rgb(223,223,226) 45px,rgb(223,223,226) 54px)"></div>
<div class="ms" style="left:312.3px;top:608.0px;width:81px;background:linear-gradient(90deg,rgb(237,237,239) 0px,rgb(237,237,239) 9px,rgb(233,233,235) 9px,rgb(233,233,235) 18px,rgb(233,233,235) 18px,rgb(233,233,235) 27px,rgb(235,237,243) 27px,rgb(235,237,243) 36px,rgb(236,238,244) 36px,rgb(236,238,244) 45px,rgb(234,234,236) 45px,rgb(234,234,236) 54px,rgb(237,237,239) 54px,rgb(237,237,239) 63px,rgb(237,237,239) 63px,rgb(237,237,239) 72px,rgb(235,235,237) 72px,rgb(235,235,237) 81px)"></div><div class="ms" style="left:610.0px;top:608.0px;width:54px;background:linear-gradient(90deg,rgb(236,236,239) 0px,rgb(236,236,239) 9px,rgb(233,231,230) 9px,rgb(233,231,230) 18px,rgb(235,233,232) 18px,rgb(235,233,232) 27px,rgb(232,232,235) 27px,rgb(232,232,235) 36px,rgb(234,234,237) 36px,rgb(234,234,237) 45px,rgb(233,233,236) 45px,rgb(233,233,236) 54px)"></div><div class="ms" style="left:312.3px;top:617.0px;width:81px;background:linear-gradient(90deg,rgb(218,215,215) 0px,rgb(218,215,215) 9px,rgb(210,210,212) 9px,rgb(210,210,212) 18px,rgb(214,217,216) 18px,rgb(214,217,216) 27px,rgb(220,217,217) 27px,rgb(220,217,217) 36px,rgb(222,219,219) 36px,rgb(222,219,219) 45px,rgb(218,220,226) 45px,rgb(218,220,226) 54px,rgb(221,223,229) 54px,rgb(221,223,229) 63px,rgb(224,221,221) 63px,rgb(224,221,221) 72px,rgb(213,213,215) 72px,rgb(213,213,215) 81px)"></div><div class="ms" style="left:610.0px;top:617.0px;width:54px;background:linear-gradient(90deg,rgb(217,215,214) 0px,rgb(217,215,214) 9px,rgb(221,222,218) 9px,rgb(221,222,218) 18px,rgb(212,213,209) 18px,rgb(212,213,209) 27px,rgb(222,223,219) 27px,rgb(222,223,219) 36px,rgb(219,217,216) 36px,rgb(219,217,216) 45px,rgb(218,216,215) 45px,rgb(218,216,215) 54px)"></div>
<div class="ms" style="left:312.3px;top:644.0px;width:81px;background:linear-gradient(90deg,rgb(236,239,238) 0px,rgb(236,239,238) 9px,rgb(237,237,239) 9px,rgb(237,237,239) 18px,rgb(240,240,242) 18px,rgb(240,240,242) 27px,rgb(239,239,241) 27px,rgb(239,239,241) 36px,rgb(239,239,241) 36px,rgb(239,239,241) 45px,rgb(240,243,242) 45px,rgb(240,243,242) 54px,rgb(244,241,241) 54px,rgb(244,241,241) 63px,rgb(244,241,241) 63px,rgb(244,241,241) 72px,rgb(241,241,243) 72px,rgb(241,241,243) 81px)"></div><div class="ms" style="left:610.0px;top:644.0px;width:54px;background:linear-gradient(90deg,rgb(242,240,239) 0px,rgb(242,240,239) 9px,rgb(243,244,240) 9px,rgb(243,244,240) 18px,rgb(241,242,238) 18px,rgb(241,242,238) 27px,rgb(247,242,239) 27px,rgb(247,242,239) 36px,rgb(247,242,239) 36px,rgb(247,242,239) 45px,rgb(241,239,238) 45px,rgb(241,239,238) 54px)"></div><div class="ms" style="left:312.3px;top:653.0px;width:81px;background:linear-gradient(90deg,rgb(204,204,206) 0px,rgb(204,204,206) 9px,rgb(218,215,215) 9px,rgb(218,215,215) 18px,rgb(214,217,216) 18px,rgb(214,217,216) 27px,rgb(213,213,215) 27px,rgb(213,213,215) 36px,rgb(215,218,217) 36px,rgb(215,218,217) 45px,rgb(204,206,212) 45px,rgb(204,206,212) 54px,rgb(219,219,221) 54px,rgb(219,219,221) 63px,rgb(206,206,208) 63px,rgb(206,206,208) 72px,rgb(212,214,220) 72px,rgb(212,214,220) 81px)"></div><div class="ms" style="left:610.0px;top:653.0px;width:54px;background:linear-gradient(90deg,rgb(211,209,208) 0px,rgb(211,209,208) 9px,rgb(217,217,220) 9px,rgb(217,217,220) 18px,rgb(214,212,211) 18px,rgb(214,212,211) 27px,rgb(213,211,210) 27px,rgb(213,211,210) 36px,rgb(212,210,209) 36px,rgb(212,210,209) 45px,rgb(216,214,213) 45px,rgb(216,214,213) 54px)"></div>
</div>
<div id="vs"><div class="tri" style="left:4.700px;top:7px;border-width:0 3.800px 4px 3.800px;border-bottom-color:#a3a3a3"></div><div class="th"></div><div class="tri" style="left:4.700px;top:616px;border-width:4px 3.800px 0 3.800px;border-top-color:#505050"></div></div>
<div id="hs"><div class="tri" style="left:5px;top:5px;border-width:3.500px 4px 3.500px 0;border-right-color:#a3a3a3"></div><div class="th"></div><div class="tri" style="left:1540px;top:5px;border-width:3.500px 0 3.500px 4px;border-left-color:#505050"></div></div>
<div id="cn"></div>
</div>

<div id="pg">
<div class="pi" style="left:0.0px;width:67.0px;border-radius:4px 0 0 4px;">上一页</div>
<div class="pi act" style="left:66.0px;width:34.0px;z-index:2;">1</div>
<div class="pi" style="left:99.0px;width:34.0px;">2</div>
<div class="pi" style="left:132.0px;width:35.0px;">3</div>
<div class="pi" style="left:166.0px;width:34.0px;">4</div>
<div class="pi" style="left:199.0px;width:34.0px;">5</div>
<div class="pi" style="left:232.0px;width:36.0px;">...</div>
<div class="pi" style="left:267.0px;width:51.0px;">232</div>
<div class="pi" style="left:317.0px;width:50.0px;">233</div>
<div class="pi" style="left:366.0px;width:51.0px;">234</div>
<div class="pi" style="left:416.0px;width:51.0px;">235</div>
<div class="pi" style="left:466.0px;width:50.0px;">236</div>
<div class="pi" style="left:515.0px;width:68.0px;border-radius:0 4px 4px 0;">下一页</div>
</div>
<div class="pt" style="left:941px">当前页码</div>
<div class="inp" style="left:1001px;top:876px;width:80px;color:#555">1</div>
<div class="pt" style="left:1085px">每页显示</div>
<div class="inp" style="left:1145px;top:876px;width:80px;color:#555">20</div>
<div class="pt" style="left:1229px">条记录，共4706条数据</div>
</body>
</html>
